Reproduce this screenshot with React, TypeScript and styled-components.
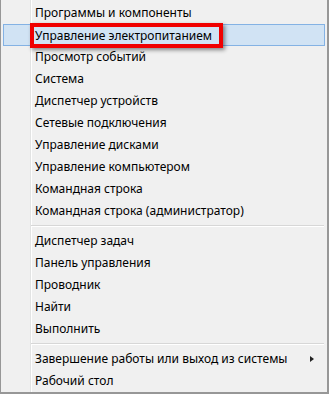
import React from "react";
import styled, { createGlobalStyle } from "styled-components";

const GlobalStyle = createGlobalStyle`
  html, body {
    margin: 0;
    padding: 0;
    background: #f0f0f0;
  }
  body {
    font-family: "Noto Sans", "Liberation Sans", sans-serif;
  }
`;

type Entry = { label: string; active?: boolean; submenu?: boolean } | "sep";

const entries: Entry[] = [
  { label: "Программы и компоненты" },
  { label: "Управление электропитанием", active: true },
  { label: "Просмотр событий" },
  { label: "Система" },
  { label: "Диспетчер устройств" },
  { label: "Сетевые подключения" },
  { label: "Управление дисками" },
  { label: "Управление компьютером" },
  { label: "Командная строка" },
  { label: "Командная строка (администратор)" },
  "sep",
  { label: "Диспетчер задач" },
  { label: "Панель управления" },
  { label: "Проводник" },
  { label: "Найти" },
  { label: "Выполнить" },
  "sep",
  { label: "Завершение работы или выход из системы", submenu: true },
  { label: "Рабочий стол" },
];

export default function App() {
  return (
    <>
      <GlobalStyle />
      <Menu>
        {entries.map((e, i) =>
          e === "sep" ? (
            <Separator key={i} />
          ) : (
            <Item key={i} $active={e.active}>
              {e.active ? <Callout>{e.label}</Callout> : <Label>{e.label}</Label>}
              {e.submenu && <Arrow />}
            </Item>
          )
        )}
      </Menu>
    </>
  );
}

const Menu = styled.div`
  box-sizing: border-box;
  width: 329px;
  height: 394px;
  display: flex;
  flex-direction: column;
  padding-top: 2px;
  border-left: 1px solid #979797;
  border-right: 2px solid #979797;
  border-bottom: 2px solid #979797;
  background:
    linear-gradient(
      to right,
      transparent 29px,
      #e2e3e3 29px,
      #e2e3e3 30px,
      #ffffff 30px,
      #ffffff 31px,
      transparent 31px
    ),
    #f0f0f0;
`;

const Item = styled.div<{ $active?: boolean }>`
  box-sizing: border-box;
  height: 22px;
  flex: none;
  margin: 0 2px 0 2px;
  padding-left: 31px;
  display: flex;
  align-items: center;
  border: 1px solid ${(p) => (p.$active ? "#84b2e4" : "transparent")};
  background: ${(p) => (p.$active ? "#d1e3f4" : "transparent")};
  color: #000;
  font-size: 12px;
`;

const Label = styled.span`
  white-space: nowrap;
  line-height: 20px;
`;

const Callout = styled(Label)`
  box-sizing: border-box;
  height: 25px;
  margin: 1px 0 0 -5px;
  padding: 0 7px 0 1px;
  border: 4px solid #f00000;
  line-height: 17px;
  box-shadow: 2px 2px 4px rgba(0, 0, 0, 0.45);
`;

const Arrow = styled.span`
  margin-left: auto;
  margin-right: 10px;
  width: 0;
  height: 0;
  border-top: 3.5px solid transparent;
  border-bottom: 3.5px solid transparent;
  border-left: 4px solid #222;
`;

const Separator = styled.div`
  flex: none;
  height: 8px;
  margin: 0 3px 0 30px;
  display: flex;
  flex-direction: column;
  justify-content: center;
  &::before {
    content: "";
    display: block;
    height: 1px;
    background: #d7d7d7;
  }
  &::after {
    content: "";
    display: block;
    height: 1px;
    background: #ffffff;
  }
`;
